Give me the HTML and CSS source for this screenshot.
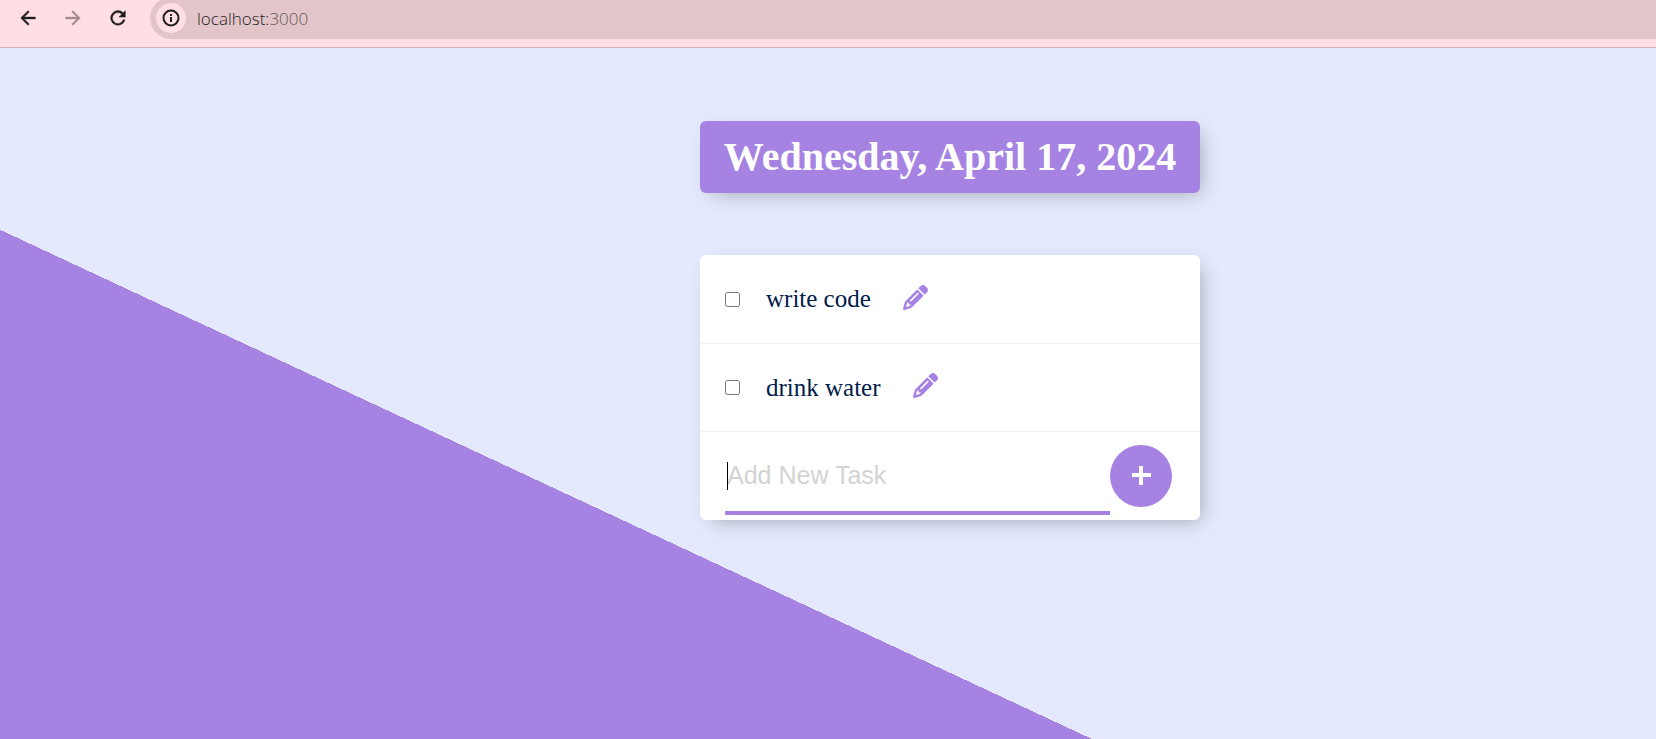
FILE: index.html
```html
<!DOCTYPE html>
<html lang="en">
<head>
<meta charset="utf-8">
<title>To-Do List</title>
<link rel="stylesheet" href="styles.css">
</head>
<body>
<header class="toolbar">
  <button class="nav" type="button" aria-label="Back"><svg viewBox="0 0 24 24"><path d="M20 11H7.8l5.6-5.6L12 4l-8 8 8 8 1.4-1.4L7.8 13H20z"/></svg></button>
  <button class="nav" type="button" aria-label="Forward" disabled><svg viewBox="0 0 24 24"><path d="M4 11h12.200l-5.600-5.600L12 4l8 8-8 8-1.400-1.400L16.200 13H4z"/></svg></button>
  <button class="nav" type="button" aria-label="Reload"><svg viewBox="0 0 24 24"><path d="M17.700 6.300A8 8 0 1 0 19.700 14h-2.100A6 6 0 1 1 16.200 7.800L13 11h7V4z"/></svg></button>
  <div class="address">
    <button class="info" type="button" aria-label="Site information"><svg viewBox="0 0 18 18"><circle cx="9" cy="9" r="7.500"/><path d="M9 8v5M9 5v2"/></svg></button>
    <span class="url">localhost:<span class="port">3000</span></span>
  </div>
</header>
<main class="page">
  <h1 class="date">Wednesday, April 17, 2024</h1>
  <section class="card">
    <div class="item">
      <input class="check" type="checkbox" id="task-1">
      <label class="task" for="task-1">write code</label>
      <button class="edit" type="button" aria-label="Edit write code"><svg viewBox="0 0 512 512"><use href="#pencil"/></svg></button>
    </div>
    <div class="item">
      <input class="check" type="checkbox" id="task-2">
      <label class="task" for="task-2">drink water</label>
      <button class="edit" type="button" aria-label="Edit drink water"><svg viewBox="0 0 512 512"><use href="#pencil"/></svg></button>
    </div>
    <form class="new-task">
      <div class="field">
        <input class="entry" type="text" placeholder="Add New Task" aria-label="Add New Task" autocomplete="off">
        <span class="caret"></span>
      </div>
      <button class="add" type="submit" aria-label="Add"><svg viewBox="0 0 20 20"><path d="M10 0v19M1 9h19"/></svg></button>
    </form>
  </section>
</main>
<svg class="defs" width="0" height="0" aria-hidden="true">
  <symbol id="pencil" viewBox="0 0 512 512"><path d="M410.3 231l11.3-11.3-33.9-33.9-62.100-62.100L291.700 89.800l-11.300 11.300-22.600 22.600L58.600 322.900c-10.400 10.400-18 23.300-22.200 37.400L1 480.700c-2.500 8.400-.2 17.500 6.100 23.700s15.300 8.500 23.700 6.100l120.300-35.400c14.100-4.200 27-11.800 37.400-22.200L387.700 253.700 410.300 231zM160 399.400l-9.100 22.700c-4 3.100-8.500 5.400-13.300 6.900L59.400 452l23-78.100c1.400-4.900 3.800-9.400 6.900-13.300l22.700-9.100v32c0 8.800 7.200 16 16 16h32zM362.700 18.700L348.300 33.200 325.700 55.800 314.300 67.100l33.900 33.900 62.100 62.100 33.900 33.900 11.300-11.300 22.600-22.600 14.500-14.500c25-25 25-65.500 0-90.500L453.300 18.700c-25-25-65.500-25-90.500 0zm-47.400 168l-144 144c-6.200 6.200-16.400 6.200-22.600 0s-6.200-16.400 0-22.600l144-144c6.200-6.200 16.400-6.200 22.600 0s6.200 16.400 0 22.600z"/></symbol>
</svg>
</body>
</html>
```
FILE: styles.css
```css
* { box-sizing: border-box; }
body {
  margin: 0;
  min-height: 100vh;
  display: flex;
  flex-direction: column;
  font-family: "Liberation Serif", "Times New Roman", serif;
}
button { border: 0; padding: 0; background: none; display: flex; align-items: center; justify-content: center; }
.defs { position: absolute; }

.toolbar {
  display: flex;
  align-items: flex-start;
  height: 48px;
  padding-left: 17px;
  gap: 23px;
  background: #ffdee4;
  border-bottom: 1px solid #d9b0ba;
  overflow: hidden;
}
.nav { width: 22px; height: 36px; flex: none; }
.nav svg { width: 22px; height: 22px; fill: #1f1f1f; stroke: #1f1f1f; stroke-width: 0.5; }
.nav:disabled svg { fill: #a08d92; stroke: #a08d92; }
.address {
  flex: 1;
  display: flex;
  align-items: center;
  gap: 11px;
  height: 42px;
  margin-top: -3px;
  margin-left: -2px;
  padding-left: 6px;
  border-radius: 21px 0 0 21px;
  background: #e1c5c9;
}
.info { width: 30px; height: 30px; border-radius: 50%; background: #ffdee4; }
.info svg { width: 18px; height: 18px; fill: none; stroke: #1f1f1f; stroke-width: 2; }
.url { font: 300 17px "Open Sans", "Noto Sans", sans-serif; color: #1f1f1f; }
.port { color: #66565a; }

.page {
  flex: 1;
  display: flex;
  flex-direction: column;
  align-items: center;
  gap: 62px;
  padding: 73px 0 73px 244px;
  background: linear-gradient(25deg, #a683e3 34.8%, #e4e9fd 34.8%);
}
.date, .card {
  width: 500px;
  max-width: 100%;
  margin: 0;
  border-radius: 6px;
  box-shadow: 6px 6px 19px -6px rgba(0, 0, 0, 0.3);
}
.date {
  padding: 10px 0;
  background: #a683e3;
  color: #fff;
  font-size: 40px;
  line-height: 52px;
  text-align: center;
}
.card { background: #fff; }
.item {
  display: flex;
  align-items: center;
  min-height: 88px;
  padding: 0 25px;
  border-bottom: 1px solid #f1f1f1;
}
.item:first-child { min-height: 89px; }
.check { width: 15px; height: 15px; margin: 0 26px 0 0; }
.task { font-size: 25px; line-height: 30px; color: #00204a; }
.edit { margin: 0 0 4px 32px; }
.edit svg { width: 25px; height: 25px; fill: #a683e3; }
.new-task { display: flex; align-items: center; height: 88px; padding: 0 28px 0 25px; }
.field { position: relative; flex: 1; align-self: stretch; display: flex; padding-bottom: 5px; }
.entry {
  width: 100%;
  padding: 8px 2px 0;
  border: 0;
  border-bottom: 4px solid #a683e3;
  outline: 0;
  background: transparent;
  font: 25px "Liberation Sans", Arial, sans-serif;
}
.entry::placeholder { color: #d3d3d3; opacity: 1; }
.caret { position: absolute; left: 2px; top: 30px; width: 1px; height: 28px; background: #000; }
.add { width: 62px; height: 62px; flex: none; border-radius: 50%; background: #a683e3; }
.add svg { width: 20px; height: 20px; fill: none; stroke: #fff; stroke-width: 4; }
```
